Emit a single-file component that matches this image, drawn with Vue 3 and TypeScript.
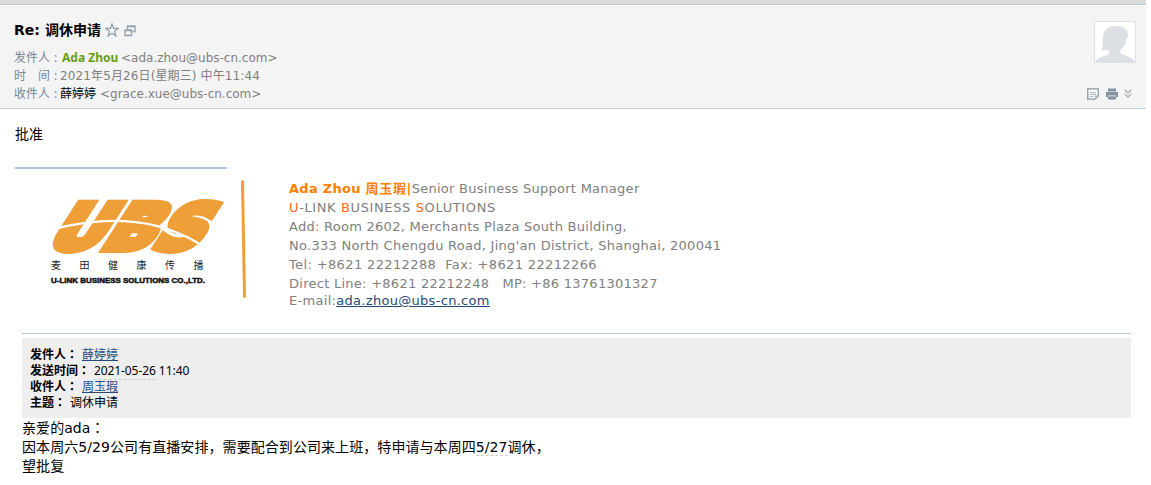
<template>
  <div class="mail-page">
    <!-- 邮件头 -->
    <header class="mail-header">
      <div class="header-main">
        <div class="subject-row">
          <h1 class="subject"><span class="subject-re">Re:</span>{{ subject }}</h1>
          <svg class="icon-star" width="14" height="14" viewBox="0 0 14 14">
            <path d="M7 0.8 L8.6 5.3 L13.4 5.4 L9.6 8.2 L11 13 L7 10.2 L3 13 L4.4 8.2 L0.6 5.4 L5.4 5.3 Z" />
          </svg>
          <svg class="icon-window" width="12" height="12" viewBox="0 0 12 12">
            <path d="M3.5 4 V1 H11 V6.5 H8.5 M3.5 1.5 H11" />
            <path d="M1 5 H7.5 V10.5 H1 Z M1 5.5 H7.5" />
          </svg>
        </div>
        <div class="meta-row">
          <span class="meta-label">发件人</span><span class="colon">:</span>
          <b class="sender">Ada Zhou</b>
          <span class="address">&lt;ada.zhou@ubs-cn.com&gt;</span>
        </div>
        <div class="meta-row">
          <span class="meta-label spread"><i>时</i><i>间</i></span><span class="colon">:</span>
          <span class="date">2021年5月26日(星期三) 中午11:44</span>
        </div>
        <div class="meta-row">
          <span class="meta-label">收件人</span><span class="colon">:</span>
          <span class="receiver">薛婷婷</span>
          <span class="address">&lt;grace.xue@ubs-cn.com&gt;</span>
        </div>
      </div>
      <div class="header-side">
        <svg class="avatar" width="42" height="42" viewBox="0 0 42 42">
          <rect x="0.5" y="0.5" width="41" height="41" fill="#fff" stroke="#dcdfe3" />
          <path fill="#dcdfe3" d="M1 41 C3 37 10 35 15 33 C16 31 15 29 13 29 L7 29 C10 26 8 20 9 15 C10 8 16 5 22 5 C29 5 35 9 34 15 L32 19 C32 23 30 26 27 28 C26 31 26 32 28 33 C33 35 39 37 41 41 Z" />
        </svg>
        <div class="tools">
          <svg width="12" height="12" viewBox="0 0 12 12">
            <path d="M0.8 0.8 H11.2 V8 L8 11.2 H0.8 Z" fill="#fff" stroke="#8796a4" stroke-width="1.3" />
            <path d="M3 4.5 H9 M3 6.5 H9 M3 8.5 H6 M8 11 V8 H11" fill="none" stroke="#a9b4be" />
          </svg>
          <svg width="12" height="12" viewBox="0 0 12 12">
            <path d="M2 0.5 H10 V3 H2 Z M0 4 H12 V9 H10 V7.5 H2 V9 H0 Z M2 8.3 H10 V11.5 H2 Z" fill="#8292a1" />
            <path d="M2 3.5 H10 M2 8 H10" stroke="#b8c2cb" />
          </svg>
          <svg class="icon-more" width="8" height="10" viewBox="0 0 8 10">
            <path d="M0.7 1 L4 4 L7.3 1 M0.7 5 L4 8 L7.3 5" fill="none" stroke="#a0a8ae" stroke-width="1.2" />
          </svg>
        </div>
      </div>
    </header>

    <!-- 回复正文 -->
    <p class="reply">批准</p>

    <!-- 签名 -->
    <section class="signature">
      <div class="sign-logo">
        <svg class="logo" width="240" height="136" viewBox="0 0 240 136">
          <g transform="translate(36 86) skewX(-33)">
            <text class="logo-word" x="-9" y="-4" textLength="153" lengthAdjust="spacingAndGlyphs">UBS</text>
          </g>
          <path d="M34 63 C78 52 138 44 192 82" fill="none" stroke="#fff" stroke-width="2.4" />
          <text v-for="(ch, i) in slogan" :key="ch" class="logo-cn" :x="36 + i * 28.5" y="102">{{ ch }}</text>
          <text class="logo-en" x="36" y="115.5" textLength="154" lengthAdjust="spacingAndGlyphs">U-LINK BUSINESS SOLUTIONS CO.,LTD.</text>
          <path d="M227.5 13.5 L229.5 130.5" stroke="#ee9f37" stroke-width="3" />
        </svg>
      </div>
      <div class="sign-text">
        <div><b class="orange">Ada Zhou <span class="cn-name">周玉瑕</span>|</b>Senior Business Support Manager</div>
        <div class="company"><span class="red">U</span>-LINK <span class="red">B</span>USINESS <span class="red">S</span>OLUTIONS</div>
        <div v-for="line in contactLines" :key="line">{{ line }}</div>
        <div class="email">E-mail:<a>ada.zhou@ubs-cn.com</a></div>
      </div>
    </section>

    <!-- 引用的原邮件 -->
    <section class="quote">
      <div class="quote-head">
        <div><b>发件人<span class="wide-colon">：</span></b><a>薛婷婷</a></div>
        <div><b>发送时间<span class="wide-colon">：</span></b><span class="marked">2021-05-26</span> 11:40</div>
        <div><b>收件人<span class="wide-colon">：</span></b><a>周玉瑕</a></div>
        <div><b>主题<span class="wide-colon">：</span></b>{{ subject }}</div>
      </div>
      <div class="quote-body">
        <div>亲爱的ada<span class="wide-colon">：</span></div>
        <div>因本周六5/29公司有直播安排，需要配合到公司来上班，特申请与本周四<span class="marked">5/27</span>调休，</div>
        <div>望批复</div>
      </div>
    </section>
  </div>
</template>

<script setup lang="ts">
const subject: string = '调休申请'

const slogan: string[] = ['麦', '田', '健', '康', '传', '播']

const contactLines: string[] = [
  'Add: Room 2602, Merchants Plaza South Building,',
  "No.333 North Chengdu Road, Jing'an District, Shanghai, 200041",
  'Tel: +8621 22212288\u00a0 Fax: +8621 22212266',
  'Direct Line: +8621 22212248\u00a0\u00a0 MP: +86 13761301327'
]
</script>

<style>
body {
  margin: 0;
  background: #fff;
}
</style>

<style scoped>
.mail-page {
  width: 1151px;
  height: 485px;
  overflow: hidden;
  color: #000;
  font-family: 'Noto Sans', 'Noto Sans CJK SC', sans-serif;
  font-size: 12px;
}

/* 邮件头 */
.mail-header {
  box-sizing: border-box;
  display: flex;
  justify-content: space-between;
  width: 1146px;
  height: 109px;
  padding: 15px 10px 0 14px;
  border-top: 4px solid #d9d9d9;
  border-bottom: 1px solid #c6cce0;
  background: #f4f4f4;
  box-shadow: inset 0 1px #c5cbdf, inset 0 2px #fff;
}

.subject-row {
  display: flex;
  align-items: center;
  height: 22px;
}

.subject {
  display: flex;
  margin: 0;
  font-family: 'DejaVu Sans', 'Noto Sans CJK SC', sans-serif;
  font-size: 14px;
  line-height: 22px;
}

.subject-re {
  width: 31px;
}

.icon-star {
  margin-left: 4px;
  fill: none;
  stroke: #8fa0ae;
  stroke-width: 1.2;
}

.icon-window {
  margin: 2px 0 0 5px;
  fill: #f4f4f4;
  stroke: #8fa0ae;
  stroke-width: 1.3;
}

.meta-row {
  display: flex;
  height: 18px;
  line-height: 18px;
  color: #808080;
  white-space: nowrap;
}

.subject-row + .meta-row {
  margin-top: 8px;
}

.meta-label {
  width: 36px;
  color: #798699;
}

.spread {
  display: flex;
  justify-content: space-between;
}

.spread i {
  font-style: normal;
}

.colon {
  width: 6px;
  padding-left: 4px;
  color: #798699;
}

.sender {
  margin-left: 2px;
  width: 59px;
  color: #669e12;
}

.address,
.date {
  font-family: 'DejaVu Sans', 'Noto Sans CJK SC', sans-serif;
}

.date {
  letter-spacing: 0.12px;
}

.receiver {
  width: 40px;
  color: #000;
}

.header-side {
  display: flex;
  flex-direction: column;
  align-items: flex-end;
  padding-top: 2px;
}

.tools {
  display: flex;
  align-items: center;
  gap: 7px;
  margin: 25px 4px 0 0;
}

.icon-more {
  margin-left: -1px;
}

/* 正文与签名 */
.reply {
  margin: 14px 0 0 15px;
  font-size: 14px;
  line-height: 22px;
}

.signature {
  display: flex;
  margin: 22px 0 0 15px;
}

.sign-logo {
  width: 274px;
}

.sign-logo::before {
  content: '';
  display: block;
  width: 212px;
  height: 2px;
  background: #b4c2e0;
}

.logo {
  display: block;
  margin-top: -2px;
  overflow: visible;
}

.logo-word {
  fill: #ee9f37;
  stroke: #ee9f37;
  stroke-width: 8px;
  font: bold 62px 'DejaVu Sans', sans-serif;
}

.logo-cn {
  fill: #222;
  font: 10px 'Noto Sans CJK SC', sans-serif;
}

.logo-en {
  fill: #111;
  stroke: #111;
  stroke-width: 0.5px;
  font: bold 7.5px 'Liberation Sans', sans-serif;
}

.sign-text {
  padding-top: 12px;
  color: #808080;
  font-family: 'DejaVu Sans', 'Noto Sans CJK SC', sans-serif;
  font-size: 13px;
  letter-spacing: 0.27px;
  line-height: 19px;
  white-space: nowrap;
}

.sign-text > div {
  height: 19px;
}

.sign-text .company {
  letter-spacing: 0.62px;
}

.sign-text > div:nth-child(5) {
  letter-spacing: 0.37px;
}

.orange {
  color: #ff8000;
}

.cn-name {
  letter-spacing: 0.7px;
}

.red {
  color: #ff6820;
}

.sign-text .email {
  letter-spacing: 0.3px;
  line-height: 16px;
}

a {
  color: #264a78;
  text-decoration: underline;
}

/* 引用邮件 */
.quote {
  width: 1109px;
  margin: 21px 0 0 22px;
  border-top: 1px solid #b5c4df;
}

.quote-head {
  margin-top: 4px;
  padding: 8px;
  background: #eee;
  line-height: 16px;
}

.quote-head > div {
  height: 16px;
}

.quote-head b {
  margin-right: 4px;
}

.quote-head .marked {
  letter-spacing: -0.1px;
}

.wide-colon {
  font-family: 'Noto Sans CJK TC', sans-serif;
}

.marked {
  border-bottom: 1px dashed #ccc;
}

.quote-body {
  font-family: 'DejaVu Sans', 'Noto Sans CJK SC', sans-serif;
  font-size: 14px;
  letter-spacing: 0.07px;
  line-height: 19px;
}

.quote-body > div {
  height: 19px;
}

.quote-body > div + div {
  line-height: 21px;
}
</style>
